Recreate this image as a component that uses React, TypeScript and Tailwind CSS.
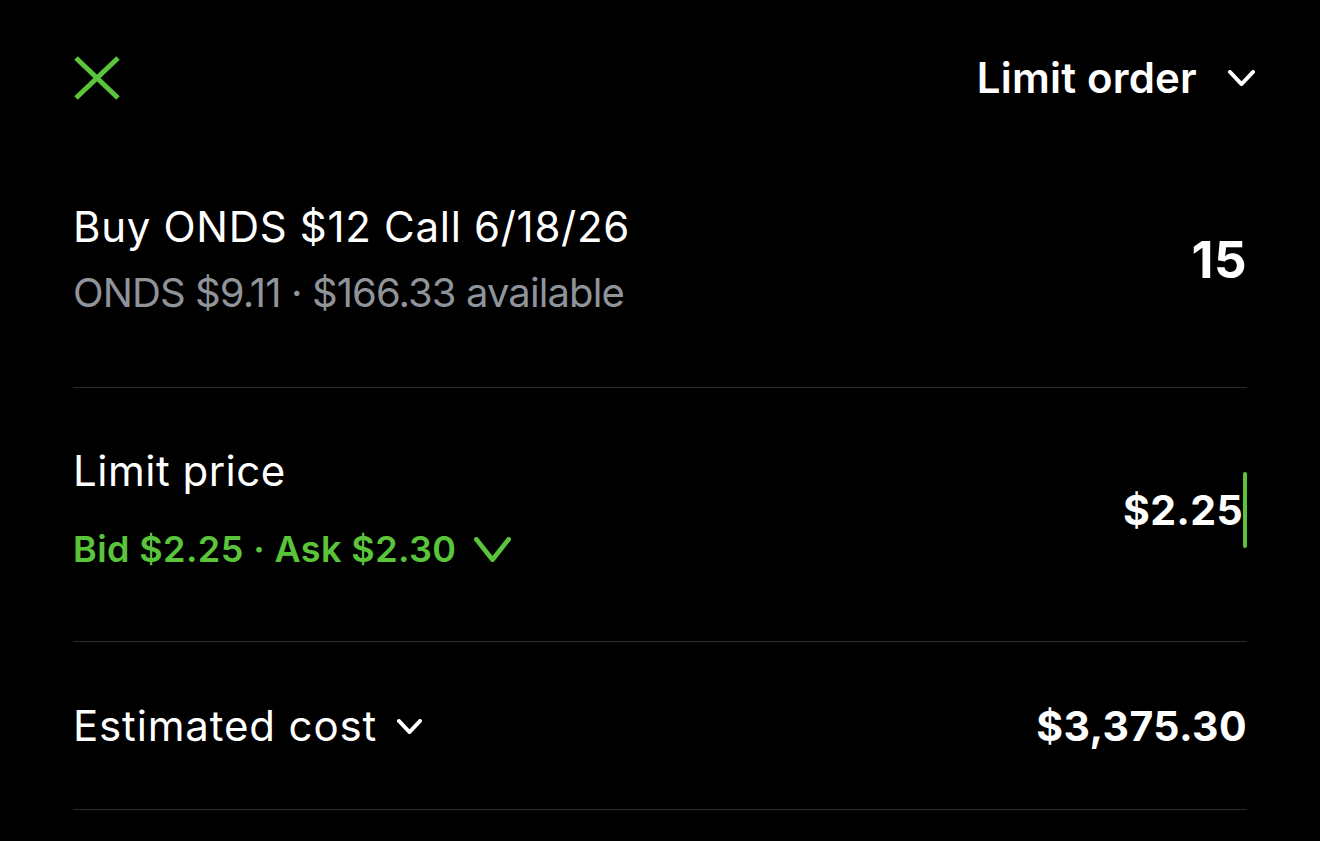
const font = { fontFamily: "Inter, 'Liberation Sans', sans-serif" };

function CloseIcon() {
  return (
    <svg width="48" height="44" viewBox="0 0 48 44" fill="none">
      <path d="M3 2 L45 42 M45 2 L3 42" stroke="#5ac53b" strokeWidth="5" strokeLinecap="butt" />
    </svg>
  );
}

function Chevron({ w, h, sw = 3.5 }: { w: number; h: number; sw?: number }) {
  const p = sw / 2;
  return (
    <svg width={w} height={h} viewBox={`0 0 ${w} ${h}`} fill="none">
      <path
        d={`M${p} ${p} L${w / 2} ${h - p} L${w - p} ${p}`}
        stroke="currentColor"
        strokeWidth={sw}
        strokeLinecap="round"
        strokeLinejoin="round"
      />
    </svg>
  );
}

export default function App() {
  return (
    <div className="min-h-[841px] w-[1320px] bg-black text-white" style={font}>
      <div className="px-[73px]">
        {/* Header */}
        <div className="flex items-center justify-between pt-[45px] h-[111px] box-border">
          <CloseIcon />
          <div className="flex items-center gap-[31px] mr-[-8px]">
            <span className="text-[42px] leading-[66px] font-semibold tracking-[0.2px]">Limit order</span>
            <Chevron w={27} h={16} sw={3.8} />
          </div>
        </div>

        {/* Contract */}
        <div className="flex items-center justify-between pt-[83px] pb-[61px] border-b-[1.5px] border-[#2b2b2b]">
          <div>
            <div className="text-[42px] leading-[66px] tracking-[0.7px]">Buy ONDS $12 Call 6/18/26</div>
            <div className="text-[40px] leading-[66px] text-[#8f949a] tracking-[-0.9px]">ONDS $9.11 · $166.33 available</div>
          </div>
          <div className="text-[51px] font-bold leading-[66px] tracking-[0.5px]">15</div>
        </div>

        {/* Limit price */}
        <div className="flex items-center justify-between pt-[50px] pb-[59px] border-b-[1.5px] border-[#2b2b2b]">
          <div>
            <div className="text-[42px] leading-[66px] tracking-[0.5px]">Limit price</div>
            <div className="mt-[12px] flex items-center gap-[18px] text-[36px] leading-[66px] font-semibold text-[#5ac53b]">
              <span className="tracking-[0.4px]">Bid $2.25 · Ask $2.30</span>
              <Chevron w={37} h={25} sw={4.6} />
            </div>
          </div>
          <div className="flex items-center">
            <span className="text-[41px] font-bold leading-[66px] tracking-[0.3px]">$2.25</span>
            <span className="w-[4px] h-[76px] bg-[#5ac53b] rounded-[2px]" />
          </div>
        </div>

        {/* Estimated cost */}
        <div className="flex items-center justify-between pt-[51px] pb-[50px] border-b-[1.5px] border-[#2b2b2b]">
          <div className="flex items-center gap-[20px]">
            <span className="text-[42px] leading-[66px] tracking-[0.85px]">Estimated cost</span>
            <Chevron w={25} h={15} sw={3.8} />
          </div>
          <span className="text-[41px] font-bold leading-[66px] tracking-[0.4px]">$3,375.30</span>
        </div>
      </div>
    </div>
  );
}
